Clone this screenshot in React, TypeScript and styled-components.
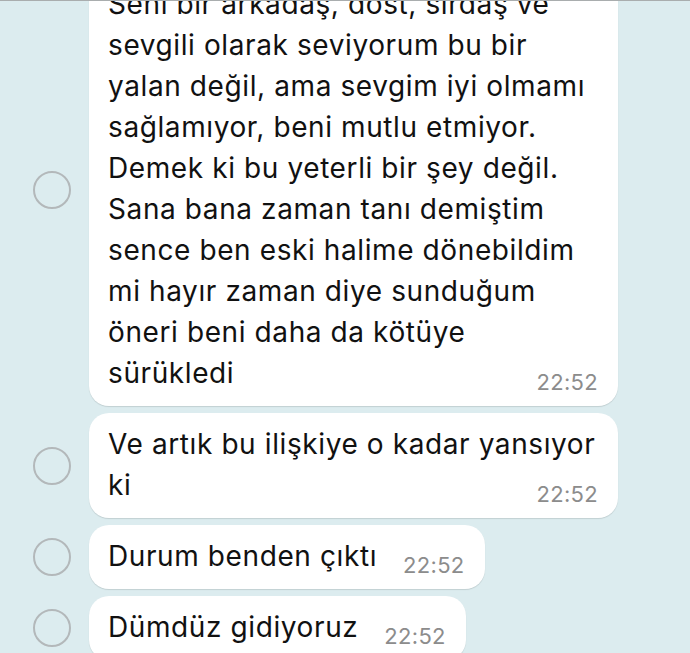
import React from 'react';
import styled, { createGlobalStyle } from 'styled-components';

const GlobalStyle = createGlobalStyle`
  html, body {
    margin: 0;
    padding: 0;
    background: #dcecef;
  }
  * {
    box-sizing: border-box;
  }
`;

type Message = {
  id: number;
  text: string;
  time: string;
};

const messages: Message[] = [
  {
    id: 1,
    text: 'Seni bir arkadaş, dost, sırdaş ve sevgili olarak seviyorum bu bir yalan değil, ama sevgim iyi olmamı sağlamıyor, beni mutlu etmiyor. Demek ki bu yeterli bir şey değil. Sana bana zaman tanı demiştim sence ben eski halime dönebildim mi hayır zaman diye sunduğum öneri beni daha da kötüye sürükledi',
    time: '22:52',
  },
  { id: 2, text: 'Ve artık bu ilişkiye o kadar yansıyor ki', time: '22:52' },
  { id: 3, text: 'Durum benden çıktı', time: '22:52' },
  { id: 4, text: 'Dümdüz gidiyoruz', time: '22:52' },
];

const App: React.FC = () => {
  return (
    <>
      <GlobalStyle />
      <Screen>
        <TopEdge />
        <ChatList>
          {messages.map((m) => (
            <Row key={m.id}>
              <SelectCircle />
              <Bubble>
                {m.text}
                <Time>{m.time}</Time>
              </Bubble>
            </Row>
          ))}
        </ChatList>
      </Screen>
    </>
  );
};

export default App;

const Screen = styled.div`
  position: relative;
  width: 690px;
  height: 653px;
  overflow: hidden;
  background: #dcecef;
  font-family: Inter, 'Noto Sans', sans-serif;
`;

const TopEdge = styled.div`
  position: absolute;
  top: 0;
  left: 0;
  right: 0;
  height: 1px;
  background: #a9adae;
  z-index: 2;
`;

const ChatList = styled.div`
  display: flex;
  flex-direction: column;
  gap: 7px;
  margin-top: -27px;
`;

const Row = styled.div`
  display: flex;
  align-items: center;
  gap: 18px;
  padding-left: 33px;
`;

const SelectCircle = styled.div`
  flex: none;
  width: 38px;
  height: 38px;
  border-radius: 50%;
  border: 2px solid #b3b8ba;
`;

const Bubble = styled.div`
  display: flow-root;
  max-width: 529px;
  padding: 11px 20px 3px 19px;
  background: #ffffff;
  border-radius: 20px;
  box-shadow: 0 1px 1px rgba(0, 0, 0, 0.12);
  color: #111111;
  font-size: 28px;
  letter-spacing: 0.6px;
  line-height: 41px;
`;

const Time = styled.span`
  float: right;
  margin-left: 26px;
  padding-top: 9px;
  color: #8c8c8c;
  font-size: 22px;
  letter-spacing: 0.3px;
  line-height: 41px;
`;
